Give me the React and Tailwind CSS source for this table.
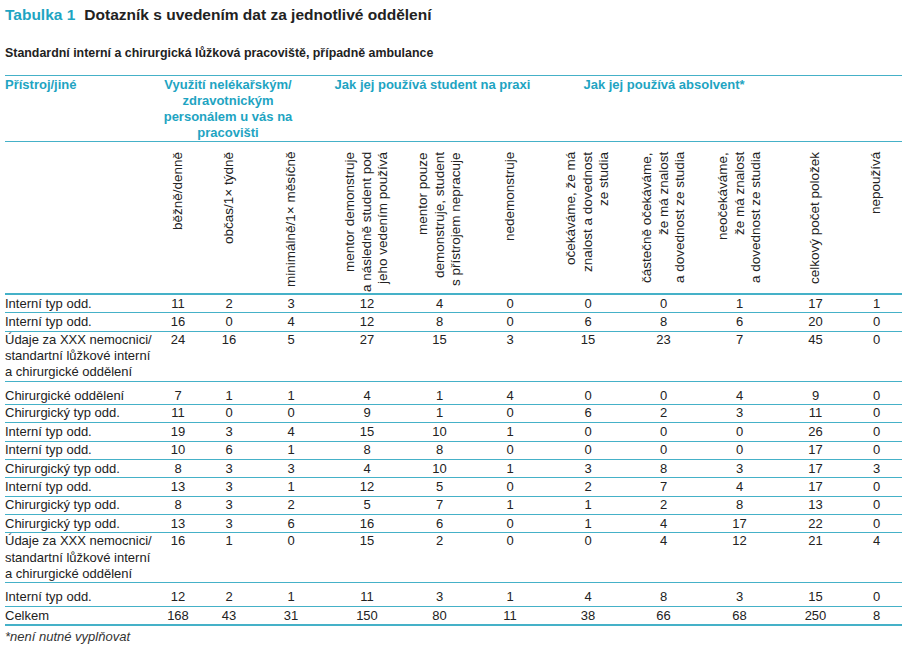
const grid =
  "grid grid-cols-[148px_50px_52px_72px_80px_65px_76px_80px_71px_81px_71px_51px]";

const headers = [
  ["běžně/denně"],
  ["občas/1× týdně"],
  ["minimálně/1× měsíčně"],
  ["mentor demonstruje", "a následně student pod", "jeho vedením používá"],
  ["mentor pouze", "demonstruje, student", "s přístrojem nepracuje"],
  ["nedemonstruje"],
  ["očekáváme, že má", "znalost a dovednost", "ze studia"],
  ["částečně očekáváme,", "že má znalost", "a dovednost ze studia"],
  ["neočekáváme,", "že má znalost", "a dovednost ze studia"],
  ["celkový počet položek"],
  ["nepoužívá"],
];

const udaje = ["Údaje za XXX nemocnici/", "standartní lůžkové interní", "a chirurgické oddělení"];

// kind: normal | multi (3 lines) | after (row after a multi row, extra top space)
const rows = [
  { label: ["Interní typ odd."], values: [11, 2, 3, 12, 4, 0, 0, 0, 1, 17, 1] },
  { label: ["Interní typ odd."], values: [16, 0, 4, 12, 8, 0, 6, 8, 6, 20, 0] },
  { label: udaje, kind: "multi", values: [24, 16, 5, 27, 15, 3, 15, 23, 7, 45, 0] },
  { label: ["Chirurgické oddělení"], kind: "after", values: [7, 1, 1, 4, 1, 4, 0, 0, 4, 9, 0] },
  { label: ["Chirurgický typ odd."], values: [11, 0, 0, 9, 1, 0, 6, 2, 3, 11, 0] },
  { label: ["Interní typ odd."], values: [19, 3, 4, 15, 10, 1, 0, 0, 0, 26, 0] },
  { label: ["Interní typ odd."], values: [10, 6, 1, 8, 8, 0, 0, 0, 0, 17, 0] },
  { label: ["Chirurgický typ odd."], values: [8, 3, 3, 4, 10, 1, 3, 8, 3, 17, 3] },
  { label: ["Interní typ odd."], values: [13, 3, 1, 12, 5, 0, 2, 7, 4, 17, 0] },
  { label: ["Chirurgický typ odd."], values: [8, 3, 2, 5, 7, 1, 1, 2, 8, 13, 0] },
  { label: ["Chirurgický typ odd."], values: [13, 3, 6, 16, 6, 0, 1, 4, 17, 22, 0] },
  { label: udaje, kind: "multi", values: [16, 1, 0, 15, 2, 0, 0, 4, 12, 21, 4] },
  { label: ["Interní typ odd."], kind: "after", values: [12, 2, 1, 11, 3, 1, 4, 8, 3, 15, 0] },
  { label: ["Celkem"], kind: "total", values: [168, 43, 31, 150, 80, 11, 38, 66, 68, 250, 8] },
];

function Row({ row }) {
  const kind = row.kind || "normal";
  const rowClass =
    kind === "multi"
      ? "h-[50px] items-start border-b border-[#45b1c8]"
      : kind === "after"
      ? "h-[23.3px] items-start pt-[6px] border-b border-[#45b1c8]"
      : kind === "total"
      ? "h-[19.35px] items-start pt-[1px] border-b-2 border-[#45b1c8]"
      : "h-[18.35px] items-center border-b border-[#45b1c8]";

  return (
    <div className={`${grid} ${rowClass}`}>
      <div>
        {row.label.map((line, i) => (
          <div key={i}>{line}</div>
        ))}
      </div>
      {row.values.map((v, i) => (
        <div key={i} className="text-center">
          {v}
        </div>
      ))}
    </div>
  );
}

export default function App() {
  return (
    <div className="w-[910px] h-[656px] bg-white px-[5px] pt-[5px] text-[#222] font-['Liberation_Sans',Arial,sans-serif]">
      {/* Title */}
      <h1 className="text-[15.5px] leading-[20px] font-bold text-[#222]">
        <span className="text-[#1ea4c2]">Tabulka 1</span>
        <span className="ml-[9px]">Dotazník s uvedením dat za jednotlivé oddělení</span>
      </h1>
      <h2 className="mt-[20px] text-[12.4px] leading-[16px] font-bold">
        Standardní interní a chirurgická lůžková pracoviště, případně ambulance
      </h2>

      {/* Table */}
      <div className="mt-[14px] w-[897px] text-[13px] leading-[16.33px]">
        {/* group header */}
        <div
          className={`${grid} h-[67px] pt-[1px] border-t border-b border-[#45b1c8] font-bold text-[#1ea4c2] text-[13px] leading-[16px]`}
        >
          <div>Přístroj/jiné</div>
          <div className="col-span-3 text-center pr-[24px]">
            Využití nelékařským/
            <br />
            zdravotnickým
            <br />
            personálem u vás na
            <br />
            pracovišti
          </div>
          <div className="col-span-3 text-center pr-[10px]">Jak jej používá student na praxi</div>
          <div className="col-span-3 text-center">Jak jej používá absolvent*</div>
          <div className="col-span-2" />
        </div>

        {/* rotated sub headers */}
        <div className={`${grid} h-[153px] pt-[10px] border-b-2 border-[#45b1c8]`}>
          <div />
          {headers.map((lines, i) => (
            <div key={i} className="flex justify-center items-start">
              <div className="h-[140px] [writing-mode:vertical-rl] [text-orientation:sideways] rotate-180 text-end whitespace-nowrap text-[13.5px] leading-[16.5px]">
                {lines.map((line, j) => (
                  <div key={j}>{line}</div>
                ))}
              </div>
            </div>
          ))}
        </div>

        {rows.map((row, i) => (
          <Row key={i} row={row} />
        ))}
      </div>

      <p className="mt-[3px] text-[13px] leading-[16px] italic text-[#333]">*není nutné vyplňovat</p>
    </div>
  );
}
